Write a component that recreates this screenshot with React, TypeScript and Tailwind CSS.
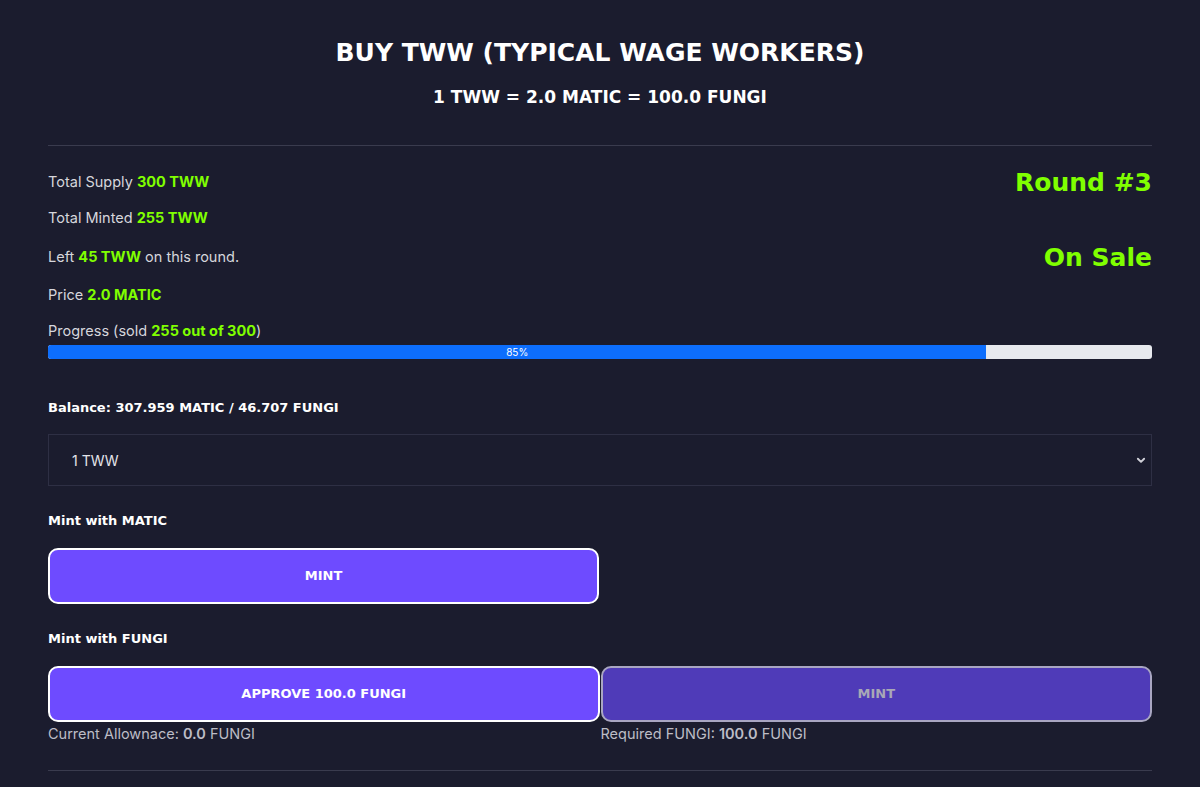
import React from 'react';

const head = "font-['DejaVu_Sans',sans-serif] font-bold";

function Stat({ label, value, suffix }: { label: string; value: string; suffix?: string }) {
  return (
    <p className="text-[14.5px] leading-[20px] text-[#d6d6dc]">
      {label} <span className="font-bold text-[#80ff00]">{value}</span>
      {suffix}
    </p>
  );
}

export default function App() {
  const sold = 255;
  const total = 300;
  const pct = Math.round((sold / total) * 100);

  return (
    <div className="min-h-screen bg-[#1b1c2e] font-['Inter',sans-serif]">
      <div className="mx-auto w-[1104px] pt-[36px]">
        {/* Header */}
        <div className="flex flex-col items-center">
          <h1 className={`${head} text-[25px] leading-[34px] text-white`}>BUY TWW (TYPICAL WAGE WORKERS)</h1>
          <h2 className={`${head} mt-[16px] text-[17px] leading-[22px] text-white`}>1 TWW = 2.0 MATIC = 100.0 FUNGI</h2>
        </div>

        <hr className="mt-[37px] border-[#3a3b4e]" />

        {/* Stats */}
        <div className="mt-[26px] flex justify-between">
          <div className="flex flex-col gap-[16px]">
            <Stat label="Total Supply" value="300 TWW" />
            <Stat label="Total Minted" value="255 TWW" />
            <div className="mt-[3px]">
              <Stat label="Left" value="45 TWW" suffix=" on this round." />
            </div>
            <div className="mt-[2px]">
              <Stat label="Price" value="2.0 MATIC" />
            </div>
          </div>
          <div className="-mt-[4px] flex flex-col items-end">
            <span className={`${head} text-[25px] leading-[30px] text-[#80ff00]`}>Round #3</span>
            <span className={`${head} mt-[45px] text-[25px] leading-[30px] text-[#80ff00]`}>On Sale</span>
          </div>
        </div>

        <div className="mt-[16px]">
          <Stat label="Progress (sold" value={`${sold} out of ${total}`} suffix=")" />
          <div className="mt-[4px] flex h-[14px] w-full overflow-hidden rounded-[3px] bg-[#e7e9ee]">
            <div
              className="flex items-center justify-center bg-[#0d6efd] text-[10px] leading-none text-white"
              style={{ width: `${pct}%` }}
            >
              {pct}%
            </div>
          </div>
        </div>

        {/* Balance */}
        <p className={`${head} mt-[40px] text-[13px] leading-[18px] text-white`}>Balance: 307.959 MATIC / 46.707 FUNGI</p>

        <div className="mt-[17px] flex h-[52px] items-center justify-between border border-[#2e2f44] pl-[23px] pr-[5px] text-[14px] text-[#e4e4ea]">
          <span>1 TWW</span>
          <svg width="10" height="10" viewBox="0 0 16 16" fill="none" stroke="#d0d0d8" strokeWidth="3" strokeLinecap="round" strokeLinejoin="round">
            <path d="M3 6l5 5 5-5" />
          </svg>
        </div>

        {/* Mint with MATIC */}
        <p className={`${head} mt-[26px] text-[13px] leading-[18px] text-white`}>Mint with MATIC</p>
        <button className={`${head} mt-[18px] h-[56px] w-[551px] rounded-[10px] border-2 border-white bg-[#6e4bff] text-[13px] text-white`}>
          MINT
        </button>

        {/* Mint with FUNGI */}
        <p className={`${head} mt-[26px] text-[13px] leading-[18px] text-white`}>Mint with FUNGI</p>
        <div className="mt-[18px] grid grid-cols-2 gap-[1px]">
          <div>
            <button className={`${head} h-[56px] w-full rounded-[10px] border-2 border-white bg-[#6e4bff] text-[13px] text-white`}>
              APPROVE 100.0 FUNGI
            </button>
            <p className="mt-[2px] text-[14.5px] leading-[20px] text-[#bdbdc6]">
              Current Allownace: <span className="font-semibold">0.0</span> FUNGI
            </p>
          </div>
          <div>
            <button className={`${head} h-[56px] w-full rounded-[10px] border-2 border-[#a9a6c2] bg-[#4f3bb8] text-[13px] text-[#a8a8b6]`}>
              MINT
            </button>
            <p className="mt-[2px] text-[14.5px] leading-[20px] text-[#bdbdc6]">
              Required FUNGI: <span className="font-semibold">100.0</span> FUNGI
            </p>
          </div>
        </div>

        <hr className="mt-[26px] border-[#3a3b4e]" />
      </div>
    </div>
  );
}
